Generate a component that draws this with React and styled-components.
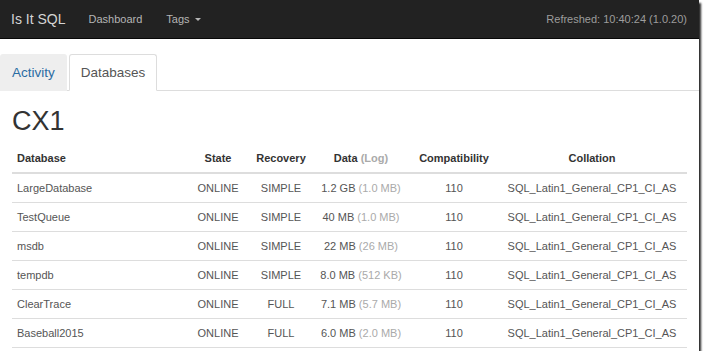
import React from "react";
import styled, { createGlobalStyle } from "styled-components";

const GlobalStyle = createGlobalStyle`
  html, body {
    margin: 0;
    padding: 0;
    background: #fff;
  }
  body {
    font-family: "Liberation Sans", Arial, sans-serif;
    color: #333;
  }
`;

const Frame = styled.div`
  width: 699px;
  height: 351px;
  overflow: hidden;
  background: #fff;
  box-shadow: 2px 3px 2px rgba(0, 0, 0, 0.85);
`;

const Navbar = styled.nav`
  height: 38px;
  background: #222;
  border-bottom: 1px solid #080808;
  display: flex;
  align-items: center;
  padding: 0 12px 0 11px;
`;

const Brand = styled.span`
  font-size: 14px;
  color: #d4d4d4;
  margin-right: 23px;
`;

const NavLink = styled.span`
  font-size: 11px;
  color: #b5b5b5;
  margin-right: 24px;
  display: flex;
  align-items: center;
`;

const Caret = styled.span`
  display: inline-block;
  margin-left: 5px;
  margin-top: 1px;
  border-top: 3px solid #b5b5b5;
  border-left: 3px solid transparent;
  border-right: 3px solid transparent;
`;

const Refreshed = styled.span`
  margin-left: auto;
  font-size: 11px;
  color: #9d9d9d;
`;

const Tabs = styled.ul`
  list-style: none;
  margin: 15px 0 0;
  padding: 0;
  display: flex;
  border-bottom: 1px solid #ddd;
`;

const Tab = styled.li`
  margin: 0 2px -1px 0;
  padding: 0 11px;
  height: 35px;
  display: flex;
  align-items: center;
  font-size: 13.5px;
  border: 1px solid ${({ active }) => (active ? "#ddd" : "transparent")};
  border-bottom-color: ${({ active }) => (active ? "#fff" : "transparent")};
  border-radius: 3px 3px 0 0;
  background: ${({ active }) => (active ? "#fff" : "#eee")};
  color: ${({ active }) => (active ? "#555" : "#2b6ca3")};
`;

const Content = styled.div`
  padding: 0 12px;
`;

const Title = styled.h1`
  margin: 15px 0 7px;
  font-size: 27px;
  font-weight: 400;
  line-height: 31px;
  color: #333;
`;

const Table = styled.table`
  width: 675px;
  table-layout: fixed;
  border-collapse: collapse;
  font-size: 11px;
  line-height: 16px;
`;

const Th = styled.th`
  padding: 6px 5px;
  font-weight: 700;
  color: #333;
  text-align: ${({ align }) => align || "center"};
  border-bottom: 2px solid #ddd;
  white-space: nowrap;
`;

const Td = styled.td`
  padding: 6px 5px;
  color: #555;
  text-align: ${({ align }) => align || "center"};
  border-bottom: 1px solid #ddd;
  white-space: nowrap;
`;

const Muted = styled.span`
  color: #aaa;
`;

const columns = [173, 66, 60, 100, 86, 190];

const rows = [
  ["LargeDatabase", "ONLINE", "SIMPLE", "1.2 GB", "1.0 MB"],
  ["TestQueue", "ONLINE", "SIMPLE", "40 MB", "1.0 MB"],
  ["msdb", "ONLINE", "SIMPLE", "22 MB", "26 MB"],
  ["tempdb", "ONLINE", "SIMPLE", "8.0 MB", "512 KB"],
  ["ClearTrace", "ONLINE", "FULL", "7.1 MB", "5.7 MB"],
  ["Baseball2015", "ONLINE", "FULL", "6.0 MB", "2.0 MB"],
];

export default function App() {
  return (
    <>
      <GlobalStyle />
      <Frame>
        <Navbar>
          <Brand>Is It SQL</Brand>
          <NavLink>Dashboard</NavLink>
          <NavLink>
            Tags <Caret />
          </NavLink>
          <Refreshed>Refreshed: 10:40:24 (1.0.20)</Refreshed>
        </Navbar>
        <Tabs>
          <Tab>Activity</Tab>
          <Tab active>Databases</Tab>
        </Tabs>
        <Content>
          <Title>CX1</Title>
          <Table>
            <colgroup>
              {columns.map((w, i) => (
                <col key={i} style={{ width: w }} />
              ))}
            </colgroup>
            <thead>
              <tr>
                <Th align="left">Database</Th>
                <Th>State</Th>
                <Th>Recovery</Th>
                <Th>
                  Data <Muted>(Log)</Muted>
                </Th>
                <Th>Compatibility</Th>
                <Th>Collation</Th>
              </tr>
            </thead>
            <tbody>
              {rows.map(([name, state, recovery, data, log]) => (
                <tr key={name}>
                  <Td align="left">{name}</Td>
                  <Td>{state}</Td>
                  <Td>{recovery}</Td>
                  <Td>
                    {data} <Muted>({log})</Muted>
                  </Td>
                  <Td>110</Td>
                  <Td>SQL_Latin1_General_CP1_CI_AS</Td>
                </tr>
              ))}
            </tbody>
          </Table>
        </Content>
      </Frame>
    </>
  );
}
